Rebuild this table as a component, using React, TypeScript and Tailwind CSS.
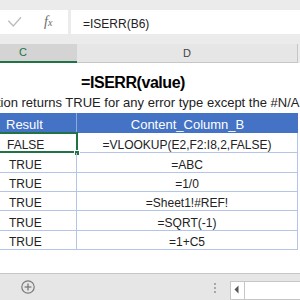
import React from "react";

const rows = [
  { r: "FALSE", f: "=VLOOKUP(E2,F2:I8,2,FALSE)", h: "h-[20px]", pl: "pl-[7px]", sel: true },
  { r: "TRUE", f: "=ABC", h: "h-[20px]", pl: "pl-[9px]", sel: false },
  { r: "TRUE", f: "=1/0", h: "h-[19px]", pl: "pl-[9px]", sel: false },
  { r: "TRUE", f: "=Sheet1!#REF!", h: "h-[19px]", pl: "pl-[9px]", sel: false },
  { r: "TRUE", f: "=SQRT(-1)", h: "h-[20px]", pl: "pl-[9px]", sel: false },
  { r: "TRUE", f: "=1+C5", h: "h-[19px]", pl: "pl-[9px]", sel: false },
];

export default function App() {
  return (
    <div
      className="w-[300px] h-[300px] overflow-hidden bg-white flex flex-col text-[#222]"
      style={{ fontFamily: '"Liberation Sans", Arial, sans-serif' }}
    >
      {/* Formula bar */}
      <div className="bg-[#ebebeb] pt-[10px] pb-[10px] flex gap-[3px] shrink-0">
        <div className="w-[68px] h-[24px] bg-white relative">
          <svg className="absolute left-0 top-0" width="68" height="24" viewBox="0 0 68 24">
            <polyline points="8.3,10.7 13.3,16 21,7.3" fill="none" stroke="#bdbdbd" strokeWidth="1.4" />
          </svg>
          <span
            className="absolute left-[44px] top-[5px] text-[#6b6b6b] italic text-[14px] leading-[14px]"
            style={{ fontFamily: '"Liberation Serif", "Times New Roman", serif' }}
          >
            f<span className="text-[10px]">x</span>
          </span>
        </div>
        <div className="flex-1 h-[24px] bg-white flex items-center pl-[12px] pt-[3px] text-[12px] text-[#222]">
          =ISERR(B6)
        </div>
      </div>

      {/* Column headers */}
      <div className="flex h-[19px] shrink-0 bg-[#ebebeb]">
        <div className="w-[77px] bg-[#d4d4d4] border-b-2 border-[#217346] flex items-center pl-[19px] text-[11px] text-[#217346]">
          C
        </div>
        <div className="w-[221px] bg-[#e6e6e6] border-r border-b border-[#c6c6c6] flex items-center justify-center text-[11px] text-[#444]">
          D
        </div>
      </div>

      {/* Title */}
      <div className="mt-[10px] h-[20px] flex justify-center pr-[34px] shrink-0">
        <span className="text-[16px] leading-[20px] font-bold tracking-[-0.45px] text-black whitespace-nowrap">
          =ISERR(value)
        </span>
      </div>

      {/* Subtitle */}
      <div className="h-[20px] overflow-hidden shrink-0">
        <div className="ml-[-97px] whitespace-nowrap text-[13px] leading-[20px] text-[#222]">
          The ISERR function returns TRUE for any error type except the #N/A error
        </div>
      </div>

      {/* Table */}
      <div className="w-[298px] flex flex-col shrink-0 text-[12px]">
        <div className="flex h-[20px] bg-[#4472c4] text-white text-[13px]">
          <div className="w-[77px] border-r border-[#8eaadb] flex items-center pl-[6px] pt-[4px]">Result</div>
          <div className="w-[221px] flex items-center justify-center pt-[4px]">Content_Column_B</div>
        </div>
        {rows.map((row, i) => (
          <div key={i} className={`flex ${row.h} border-b border-[#b4c6e7] relative`}>
            <div className={`w-[77px] border-r border-[#b4c6e7] flex items-center ${row.pl} pt-[4px]`}>{row.r}</div>
            <div className="w-[221px] border-r border-[#b4c6e7] flex items-center justify-center pt-[4px]">{row.f}</div>
            {row.sel && (
              <>
                <div className="absolute left-[-2px] top-[-1px] w-[80px] h-[21px] border-2 border-[#217346]" />
                <div className="absolute left-[74px] top-[17px] w-[6px] h-[6px] bg-[#217346] border border-white" />
              </>
            )}
          </div>
        ))}
      </div>

      <div className="flex-1" />

      {/* Bottom bar */}
      <div className="h-[27px] shrink-0 bg-[#e6e6e6] border-t border-[#c6c6c6] flex">
        <div className="ml-[21px] mt-[6px]">
          <svg width="14" height="14" viewBox="0 0 14 14">
            <circle cx="7" cy="7" r="6.2" fill="none" stroke="#7a7a7a" strokeWidth="1.2" />
            <line x1="7" y1="3.6" x2="7" y2="10.4" stroke="#7a7a7a" strokeWidth="1.3" />
            <line x1="3.6" y1="7" x2="10.4" y2="7" stroke="#7a7a7a" strokeWidth="1.3" />
          </svg>
        </div>
        <div className="ml-[179px] mt-[9px] flex flex-col gap-[2px]">
          <div className="w-[2px] h-[2px] bg-[#a8a8a8]" />
          <div className="w-[2px] h-[2px] bg-[#a8a8a8]" />
          <div className="w-[2px] h-[2px] bg-[#a8a8a8]" />
        </div>
        <div className="ml-[14px] mt-[7px] flex-1 bg-white border border-[#c6c6c6] border-r-0 flex">
          <div className="w-[14px] border-r border-[#c6c6c6] flex items-start pt-[3px] pl-[3px]">
            <svg width="5" height="9" viewBox="0 0 5 9">
              <polygon points="4.5,0.5 0.5,4.5 4.5,8.5" fill="#555" />
            </svg>
          </div>
        </div>
      </div>
    </div>
  );
}
